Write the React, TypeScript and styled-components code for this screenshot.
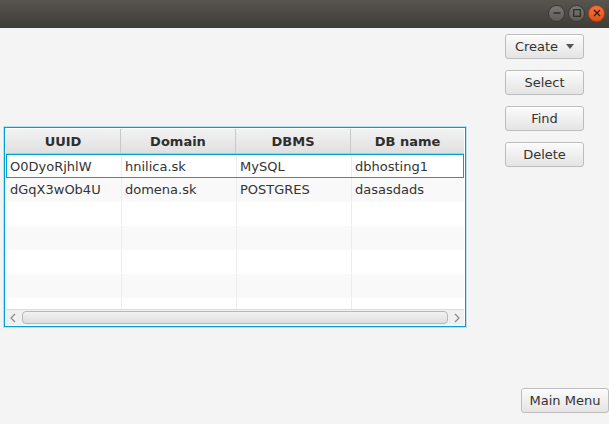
import React from 'react'
import styled, { createGlobalStyle } from 'styled-components'

const Global = createGlobalStyle`
  html, body { margin: 0; padding: 0; background: #f4f4f4; }
  body { font-family: "DejaVu Sans", "Liberation Sans", sans-serif; font-size: 13px; color: #333; }
`

const rows = [
  { uuid: 'O0DyoRjhlW', domain: 'hnilica.sk', dbms: 'MySQL', name: 'dbhosting1' },
  { uuid: 'dGqX3wOb4U', domain: 'domena.sk', dbms: 'POSTGRES', name: 'dasasdads' },
]
const columns = ['UUID', 'Domain', 'DBMS', 'DB name']
const TOTAL_ROWS = 7

const App = () => {
  const filled = [...rows, ...Array(TOTAL_ROWS - rows.length).fill(null)]
  return (
    <Window>
      <Global />
      <TitleBar>
        <WinButton>
          <svg width="8" height="8" viewBox="0 0 8 8"><path d="M0.5 4h7" stroke="#2b2a27" strokeWidth="1.4" /></svg>
        </WinButton>
        <WinButton>
          <svg width="8" height="8" viewBox="0 0 8 8"><rect x="0.7" y="0.7" width="6.6" height="6.6" fill="none" stroke="#2b2a27" strokeWidth="1.2" /></svg>
        </WinButton>
        <WinButton close>
          <svg width="8" height="8" viewBox="0 0 8 8"><path d="M1 1l6 6M7 1L1 7" stroke="#3a1a0c" strokeWidth="1.3" /></svg>
        </WinButton>
      </TitleBar>
      <Content>
        <TableArea>
          <Table>
            <Header>
              {columns.map(c => <HeadCell key={c}>{c}</HeadCell>)}
            </Header>
            <Body>
              {filled.map((r, i) => (
                <Row key={i} odd={i % 2 === 1} focused={i === 0}>
                  <Cell>{r?.uuid}</Cell>
                  <Cell>{r?.domain}</Cell>
                  <Cell>{r?.dbms}</Cell>
                  <Cell>{r?.name}</Cell>
                </Row>
              ))}
            </Body>
            <ScrollBar>
              <Arrow>
                <svg width="6" height="10" viewBox="0 0 6 10"><path d="M5 1L1 5l4 4" fill="none" stroke="#8a8a8a" strokeWidth="1.2" /></svg>
              </Arrow>
              <Thumb />
              <Arrow>
                <svg width="6" height="10" viewBox="0 0 6 10"><path d="M1 1l4 4-4 4" fill="none" stroke="#8a8a8a" strokeWidth="1.2" /></svg>
              </Arrow>
            </ScrollBar>
          </Table>
        </TableArea>
        <Side>
          <Button>Create <Caret /></Button>
          <Button>Select</Button>
          <Button>Find</Button>
          <Button>Delete</Button>
          <MenuButton>Main Menu</MenuButton>
        </Side>
      </Content>
    </Window>
  )
}

const Window = styled.div`
  width: 609px;
  height: 424px;
  display: flex;
  flex-direction: column;
  overflow: hidden;
`

const TitleBar = styled.div`
  height: 28px;
  flex: none;
  background: linear-gradient(#58554f, #3e3c38);
  display: flex;
  align-items: center;
  justify-content: flex-end;
  gap: 3px;
  padding-right: 4px;
`

const WinButton = styled.div<{ close?: boolean }>`
  width: 17px;
  height: 17px;
  border-radius: 50%;
  margin-top: -2px;
  display: flex;
  align-items: center;
  justify-content: center;
  box-sizing: border-box;
  border: 1px solid ${p => (p.close ? '#b83e12' : '#3a3935')};
  background: ${p => (p.close ? 'linear-gradient(#f4733f, #e0501d)' : 'linear-gradient(#7a7873, #5d5b57)')};
`

const Content = styled.div`
  flex: 1;
  display: flex;
`

const TableArea = styled.div`
  padding: 99px 0 0 4px;
`

const Table = styled.div`
  width: 462px;
  height: 200px;
  box-sizing: border-box;
  border: 1px solid #039ed3;
  box-shadow: 0 0 0 1px rgba(3, 158, 211, 0.25);
  padding: 1px;
  background: #fff;
  display: flex;
  flex-direction: column;
`

const Header = styled.div`
  display: grid;
  grid-template-columns: 115px 115px 115px 113px;
  height: 25px;
  background: linear-gradient(#f3f3f3, #e0e0e0);
  border-bottom: 1px solid #c5c5c5;
  box-sizing: border-box;
  flex: none;
`

const HeadCell = styled.div`
  display: flex;
  align-items: center;
  justify-content: center;
  font-weight: bold;
  color: #2e2e2e;
  border-right: 1px solid #c8c8c8;
  &:last-child { border-right: none; }
`

const Body = styled.div`
  flex: 1;
  overflow: hidden;
`

const Row = styled.div<{ odd: boolean; focused: boolean }>`
  display: grid;
  grid-template-columns: 115px 115px 115px 113px;
  height: 24px;
  box-sizing: border-box;
  background: ${p => (p.odd ? '#f9f9f9' : '#fff')};
  border: 1px solid ${p => (p.focused ? '#039ed3' : 'transparent')};
  border-top: none;
  ${p => p.focused && 'border-top: 1px solid #039ed3;'}
`

const Cell = styled.div`
  display: flex;
  align-items: center;
  padding-left: 3px;
  color: #333;
  border-right: 1px solid #ececec;
  &:last-child { border-right: none; }
  white-space: nowrap;
  overflow: hidden;
`

const ScrollBar = styled.div`
  flex: none;
  height: 15px;
  display: flex;
  align-items: center;
  background: #f0f0f0;
  border-top: 1px solid #dcdcdc;
`

const Arrow = styled.div`
  width: 14px;
  display: flex;
  align-items: center;
  justify-content: center;
`

const Thumb = styled.div`
  flex: 1;
  height: 11px;
  margin: 0 2px;
  border: 1px solid #b8b8b8;
  border-radius: 4px;
  background: linear-gradient(#f2f2f2, #dedede);
`

const Side = styled.div`
  flex: 1;
  margin-left: 39px;
  padding-top: 6px;
  display: flex;
  flex-direction: column;
  gap: 11px;
`

const Button = styled.button`
  width: 79px;
  height: 25px;
  box-sizing: border-box;
  border: 1px solid #bdbdbd;
  border-radius: 3px;
  background: linear-gradient(#fbfbfb, #e4e4e4);
  box-shadow: inset 0 1px 0 #fff;
  font-family: "DejaVu Sans", "Liberation Sans", sans-serif;
  font-size: 13px;
  color: #333;
  padding: 0;
  display: flex;
  align-items: center;
  justify-content: center;
  gap: 8px;
`

const Caret = styled.span`
  width: 0;
  height: 0;
  border-left: 4px solid transparent;
  border-right: 4px solid transparent;
  border-top: 5px solid #555;
`

const MenuButton = styled(Button)`
  width: 88px;
  margin-top: auto;
  margin-bottom: 11px;
  align-self: flex-end;
`

export default App
